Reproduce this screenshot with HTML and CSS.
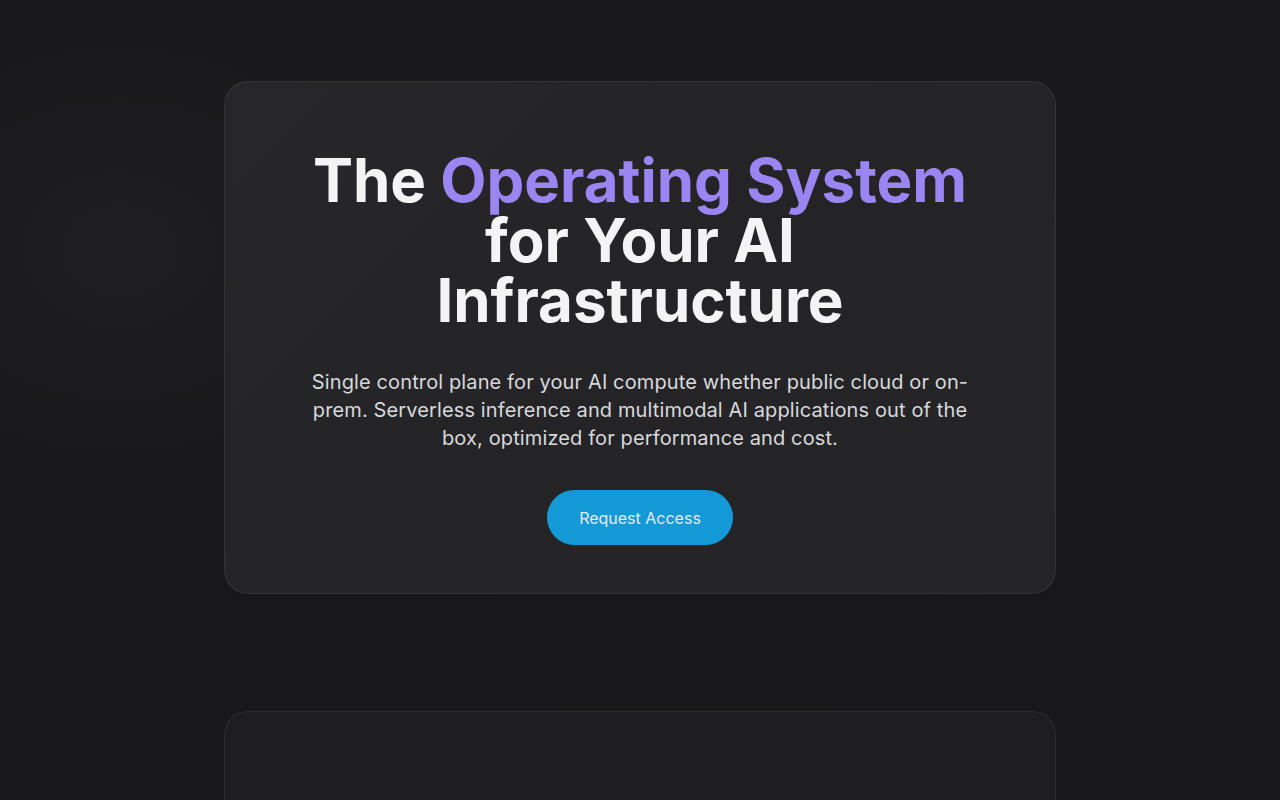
FILE: index.html
```html
<!DOCTYPE html>
<html lang="en">
<head>
<meta charset="utf-8">
<title>AI Infrastructure</title>
<link rel="stylesheet" href="styles.css">
</head>
<body>
<main class="page">
  <section class="hero card">
    <h1 class="title">The <span class="accent">Operating System</span><br>for Your AI Infrastructure</h1>
    <p class="lead">Single control plane for your AI compute whether public cloud or on-prem. Serverless inference and multimodal AI applications out of the box, optimized for performance and cost.</p>
    <a class="btn" href="#">Request Access</a>
  </section>
  <section class="next card"></section>
</main>
</body>
</html>
```
FILE: styles.css
```css
* { box-sizing: border-box; }
html, body { margin: 0; padding: 0; }
body {
  background: #18181a;
  background-image: radial-gradient(ellipse 500px 400px at 120px 250px, rgba(30,30,36,0.9), rgba(24,24,26,0) 70%);
  min-height: 800px;
  font-family: Inter, "Noto Sans", sans-serif;
  color: #f4f4f5;
  overflow: hidden;
}
.page {
  display: flex;
  flex-direction: column;
  align-items: center;
  padding-top: 81px;
  gap: 117px;
}
.card {
  width: 832px;
  border-radius: 24px;
  border: 1px solid rgba(255,255,255,0.07);
}
.hero {
  background: linear-gradient(135deg, #27272b 0%, #242427 50%, #252528 100%);
  padding: 68px 80px 48px;
  display: flex;
  flex-direction: column;
  align-items: center;
  text-align: center;
}
.title {
  margin: 0;
  font-size: 60px;
  font-weight: 700;
  line-height: 60px;
  color: #f4f4f5;
}
.accent { color: #9a86f2; }
.lead {
  margin: 38px 0 0;
  font-size: 20px;
  line-height: 28px;
  letter-spacing: 0.12px;
  color: #d8d8dc;
  max-width: 672px;
}
.btn {
  margin-top: 38px;
  display: inline-flex;
  align-items: center;
  justify-content: center;
  height: 55px;
  padding: 0 32px;
  border-radius: 28px;
  background: #1399d6;
  color: #e7e9ee;
  font-size: 16px;
  text-decoration: none;
}
.next {
  height: 200px;
  background: linear-gradient(90deg, #1e1e21 0%, #1f1f23 60%, #1e1e21 100%);
}
```
